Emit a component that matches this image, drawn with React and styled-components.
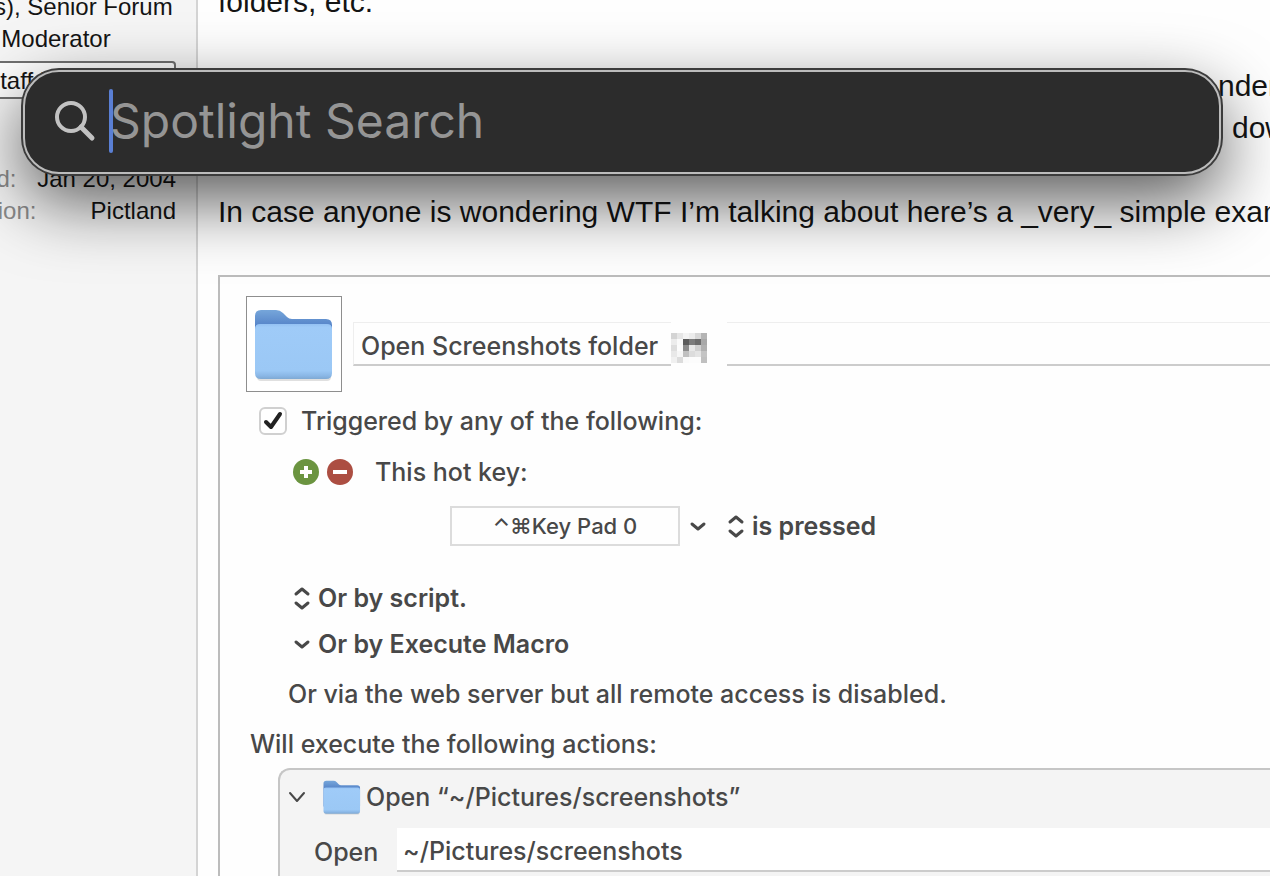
import React, { useState } from "react";
import styled, { createGlobalStyle } from "styled-components";

const GlobalStyle = createGlobalStyle`
  * {
    box-sizing: border-box;
  }

  body {
    margin: 0;
    background: #fefefe;
  }

  button,
  input,
  select {
    margin: 0;
    padding: 0;
    border: none;
    background: none;
    font: inherit;
    color: inherit;
    outline: none;
  }
`;

// grey levels of the pixelated key in the macro title
const MOSAIC = [
  ["#d4d4d4", "#e6e6e6", "#f4f4f4", "#ececec", "#d8d8d8", "#b4b4b4"],
  ["#ececec", "#fafafa", "#5c5c5c", "#7c7c7c", "#6c6c6c", "#a8a8a8"],
  ["#dedede", "#fcfcfc", "#8c8c8c", "#e8e8e8", "#d0d0d0", "#b0b0b0"],
  ["#e8e8e8", "#f6f6f6", "#c0c0c0", "#dcdcdc", "#e4e4e4", "#c4c4c4"],
  ["#f0f0f0", "#dcdcdc", "#fafafa", "#fcfcfc", "#fcfcfc", "#c0c0c0"],
];

const Mosaic = () => (
  <svg width="36" height="30" viewBox="0 0 36 30" aria-hidden="true">
    {MOSAIC.map((row, y) =>
      row.map((fill, x) => (
        <rect key={`${x}-${y}`} x={x * 6} y={y * 6} width="6" height="6" fill={fill} />
      ))
    )}
  </svg>
);

const Folder = ({ size }) => (
  <svg width={size} height={size} viewBox="0 0 80 80" aria-hidden="true">
    <defs>
      <linearGradient id="folderBack" x1="0" y1="0" x2="0" y2="1">
        <stop offset="0" stopColor="#76a6da" />
        <stop offset="0.3" stopColor="#5583c8" />
      </linearGradient>
      <linearGradient id="folderFront" x1="0" y1="0" x2="0" y2="1">
        <stop offset="0" stopColor="#94c1f3" />
        <stop offset="0.06" stopColor="#9fcbf8" />
        <stop offset="0.85" stopColor="#9bc8f5" />
        <stop offset="0.94" stopColor="#8ab7e6" />
        <stop offset="1" stopColor="#7fa9d3" />
      </linearGradient>
    </defs>
    <rect x="3" y="69" width="74" height="8" rx="4" fill="#000" opacity="0.12" />
    <path d="M1 12Q1 6 7 6H22Q26 6 29 9L33 13Q35 15 38 15H72Q78 15 78 21V60H1Z" fill="url(#folderBack)" />
    <path d="M1 25Q1 20 6 20H73Q78 20 78 25V69Q78 75 72 75H7Q1 75 1 69Z" fill="url(#folderFront)" />
  </svg>
);

const Down = ({ thin }) => (
  <svg width="18" height="26" viewBox="0 0 18 26" fill="none" stroke="currentColor"
    strokeWidth={thin ? 2 : 3} strokeLinecap="round" strokeLinejoin="round" aria-hidden="true">
    <path d={thin ? "M2 9L9 17L16 9" : "M3 11L9 16L15 11"} />
  </svg>
);

const UpDown = () => (
  <svg width="18" height="26" viewBox="0 0 18 26" fill="none" stroke="currentColor"
    strokeWidth="3" strokeLinecap="round" strokeLinejoin="round" aria-hidden="true">
    <path d="M3 9L9 4L15 9M3 18L9 23L15 18" />
  </svg>
);

const SearchIcon = () => (
  <svg width="42" height="42" viewBox="0 0 42 42" fill="none" stroke="#c2c2c2" aria-hidden="true">
    <circle cx="17" cy="17" r="14" strokeWidth="4" />
    <path d="M27 27L38 38" strokeWidth="5" strokeLinecap="round" />
  </svg>
);

const App = () => {
  const [query, setQuery] = useState("");
  const [enabled, setEnabled] = useState(true);

  return (
    <>
      <GlobalStyle />
      <Page>
        <Sidebar>
          <UserCell>
            <UserTitle>(mods), Senior Forum Moderator</UserTitle>
            <Banner>Staff Member</Banner>
            <UserExtras>
              <Pair>
                <dt>Joined:</dt>
                <dd>Jan 20, 2004</dd>
              </Pair>
              <Pair>
                <dt>Location:</dt>
                <dd>Pictland</dd>
              </Pair>
            </UserExtras>
          </UserCell>
        </Sidebar>

        <Post>
          <Line>folders, etc.</Line>
          <Clipped>
            <span>nder</span>
            <span>down</span>
          </Clipped>
          <Line>
            In case anyone is wondering WTF I’m talking about here’s a _very_ simple example
          </Line>

          <Macro>
            <TitleRow>
              <IconWell>
                <Folder size={80} />
              </IconWell>
              <Title>
                <TitleField aria-label="Macro name" defaultValue="Open Screenshots folder" />
                <Mosaic />
                <FieldRest />
              </Title>
            </TitleRow>

            <CheckRow>
              <Tick
                type="checkbox"
                id="triggered"
                checked={enabled}
                onChange={(e) => setEnabled(e.target.checked)}
              />
              <label htmlFor="triggered">Triggered by any of the following:</label>
            </CheckRow>

            <HotKeyRow>
              <Round $color="#6b9440" aria-label="Add trigger">
                <svg width="26" height="26" viewBox="0 0 26 26" stroke="#fff" strokeWidth="4">
                  <path d="M13 7V19M7 13H19" />
                </svg>
              </Round>
              <Round $color="#ac4e42" aria-label="Remove trigger">
                <svg width="26" height="26" viewBox="0 0 26 26" stroke="#fff" strokeWidth="4">
                  <path d="M6 13H20" />
                </svg>
              </Round>
              <span>This hot key:</span>
            </HotKeyRow>

            <KeyRow>
              <KeyField aria-label="Hot key" defaultValue="⌃⌘Key Pad 0" />
              <Choice aria-label="Hot key options">
                <Down />
              </Choice>
              <Picker>
                <UpDown />
                <select aria-label="Hot key event" defaultValue="is pressed">
                  <option>is pressed</option>
                </select>
              </Picker>
            </KeyRow>

            <ScriptRow>
              <Choice>
                <UpDown />
                Or by script.
              </Choice>
            </ScriptRow>
            <MacroRow>
              <Choice>
                <Down />
                Or by Execute Macro
              </Choice>
            </MacroRow>

            <Note>Or via the web server but all remote access is disabled.</Note>
            <Heading>Will execute the following actions:</Heading>

            <Action>
              <ActionHead>
                <Choice aria-label="Collapse action">
                  <Down thin />
                </Choice>
                <Folder size={38} />
                <span>Open “~/Pictures/screenshots”</span>
              </ActionHead>
              <ActionBody>
                <label htmlFor="path">Open</label>
                <PathField id="path" defaultValue="~/Pictures/screenshots" />
              </ActionBody>
            </Action>
          </Macro>
        </Post>

        <Spotlight>
          <SearchIcon />
          <SearchBox>
            <Caret />
            <input
              aria-label="Spotlight Search"
              placeholder="Spotlight Search"
              value={query}
              onChange={(e) => setQuery(e.target.value)}
            />
          </SearchBox>
        </Spotlight>
      </Page>
    </>
  );
};

export default App;

const Page = styled.div`
  position: relative;
  display: flex;
  height: 100vh;
  overflow: hidden;
  font-family: "Liberation Sans", Arial, sans-serif;
  color: #141414;
`;

const Sidebar = styled.aside`
  display: flex;
  justify-content: flex-end;
  flex: none;
  width: 198px;
  padding-right: 20px;
  overflow: hidden;
  background: #f5f5f5;
  border-right: 2px solid #d4d4d4;
  font-size: 24px;
  line-height: 32px;
`;

const UserCell = styled.div`
  flex: none;
  width: 240px;
  margin-top: -9px;
`;

const UserTitle = styled.div`
  text-align: center;
`;

const Banner = styled.div`
  margin-top: 6px;
  padding-top: 2px;
  border: 2px solid #707070;
  border-radius: 4px;
  background: #fefefe;
  text-align: center;
`;

const UserExtras = styled.dl`
  margin: 64px 0 0;
`;

const Pair = styled.div`
  display: flex;
  justify-content: space-between;
  padding-left: 3px;

  dt {
    color: #8c8c8c;
  }

  dd {
    margin: 0;
  }
`;

const Post = styled.main`
  flex: 1;
  min-width: 0;
  margin-top: -19px;
  padding-left: 20px;
  font-size: 30px;
  line-height: 42px;
`;

const Line = styled.p`
  margin: 0 0 42px;
  white-space: nowrap;
`;

const Clipped = styled(Line)`
  display: flex;
  flex-direction: column;
  align-items: flex-end;

  span {
    width: 52px;
  }

  span + span {
    width: 38px;
  }
`;

const Macro = styled.section`
  padding: 19px 0 0 26px;
  border: 2px solid #bcbcbc;
  border-right: none;
  font-family: Inter, sans-serif;
  font-size: 25px;
  font-weight: 500;
  line-height: 32px;
  color: #484848;
  white-space: nowrap;
`;

const TitleRow = styled.div`
  display: flex;
  align-items: center;
  gap: 11px;
`;

const IconWell = styled.div`
  display: flex;
  align-items: center;
  justify-content: center;
  flex: none;
  width: 96px;
  height: 96px;
  border: 1px solid #8e8e8e;
  background: #fff;
`;

const Title = styled.div`
  display: flex;
  align-items: center;
  flex: 1;

  svg {
    margin-top: 8px;
  }
`;

const TitleField = styled.input`
  width: 318px;
  height: 44px;
  padding: 4px 0 0 7px;
  border-top: 1px solid #eee;
  border-left: 1px solid #eee;
  border-bottom: 2px solid #ccc;
`;

const FieldRest = styled.div`
  flex: 1;
  height: 44px;
  margin-left: 20px;
  border-top: 1px solid #eee;
  border-bottom: 2px solid #ccc;
`;

const CheckRow = styled.div`
  display: flex;
  align-items: center;
  gap: 14px;
  margin: 13px 0 0 13px;
`;

const Tick = styled.input`
  appearance: none;
  width: 28px;
  height: 28px;
  border: 2px solid #d0d0d0;
  border-radius: 6px;
  background: #fff;

  &:checked {
    background: #fff url("data:image/svg+xml,%3Csvg xmlns='http://www.w3.org/2000/svg' viewBox='0 0 24 24' fill='none' stroke='%23222' stroke-width='4' stroke-linecap='round' stroke-linejoin='round'%3E%3Cpath d='M5 13L10 18L19 5'/%3E%3C/svg%3E") center / 24px no-repeat;
  }
`;

const HotKeyRow = styled.div`
  display: flex;
  align-items: center;
  gap: 8px;
  margin: 19px 0 0 47px;

  span {
    margin-left: 14px;
  }
`;

const Round = styled.button`
  width: 26px;
  height: 26px;
  border-radius: 50%;
  background: ${({ $color }) => $color};

  svg {
    display: block;
  }
`;

const KeyRow = styled.div`
  display: flex;
  align-items: center;
  margin: 18px 0 0 204px;
`;

const KeyField = styled.input`
  width: 230px;
  height: 40px;
  margin-right: 9px;
  border: 2px solid #dcdcdc;
  font-size: 22px;
  text-align: center;
`;

const Choice = styled.button`
  display: flex;
  align-items: center;
  gap: 7px;
  font-weight: 600;
`;

const Picker = styled.div`
  display: flex;
  align-items: center;
  gap: 7px;
  margin-left: 20px;
  font-weight: 600;

  select {
    appearance: none;
  }
`;

const ScriptRow = styled.div`
  margin: 36px 0 0 47px;
`;

const MacroRow = styled.div`
  margin: 14px 0 0 47px;
`;

const Note = styled.div`
  margin: 18px 0 0 42px;
`;

const Heading = styled.div`
  margin: 18px 0 0 4px;
`;

const Action = styled.div`
  margin: 8px 0 0 32px;
  padding: 6px 0 10px 8px;
  border: 2px solid #c6c6c6;
  border-right: none;
  border-radius: 12px 0 0 0;
  background: #f4f4f4;
`;

const ActionHead = styled.div`
  display: flex;
  align-items: center;
  height: 42px;

  button {
    margin-right: 17px;
  }

  span {
    margin-left: 5px;
  }
`;

const ActionBody = styled.div`
  display: flex;
  align-items: center;
  gap: 18px;
  margin: 10px 0 0 26px;

  label {
    width: 65px;
    padding-top: 4px;
  }
`;

const PathField = styled.input`
  flex: 1;
  height: 44px;
  padding: 4px 0 0 6px;
  border-bottom: 2px solid #ccc;
  background: #fff;
`;

const Spotlight = styled.div`
  position: absolute;
  top: 70px;
  left: 23px;
  right: 49px;
  display: flex;
  align-items: center;
  gap: 14px;
  height: 104px;
  padding: 0 29px 3px;
  border: 2px solid #bcbcbc;
  border-radius: 36px;
  background: #2c2c2c;
  box-shadow: 0 0 0 2px #3c3c3c, 0 26px 70px rgba(0, 0, 0, 0.66);
`;

const SearchBox = styled.div`
  position: relative;
  flex: 1;

  input {
    width: 100%;
    height: 64px;
    font-family: Inter, sans-serif;
    font-size: 48px;
    color: #eee;
  }

  input::placeholder {
    color: #959595;
    opacity: 1;
  }
`;

const Caret = styled.span`
  position: absolute;
  top: 0;
  left: -1px;
  width: 4px;
  height: 64px;
  border-radius: 2px;
  background: #5a7fd4;
`;
